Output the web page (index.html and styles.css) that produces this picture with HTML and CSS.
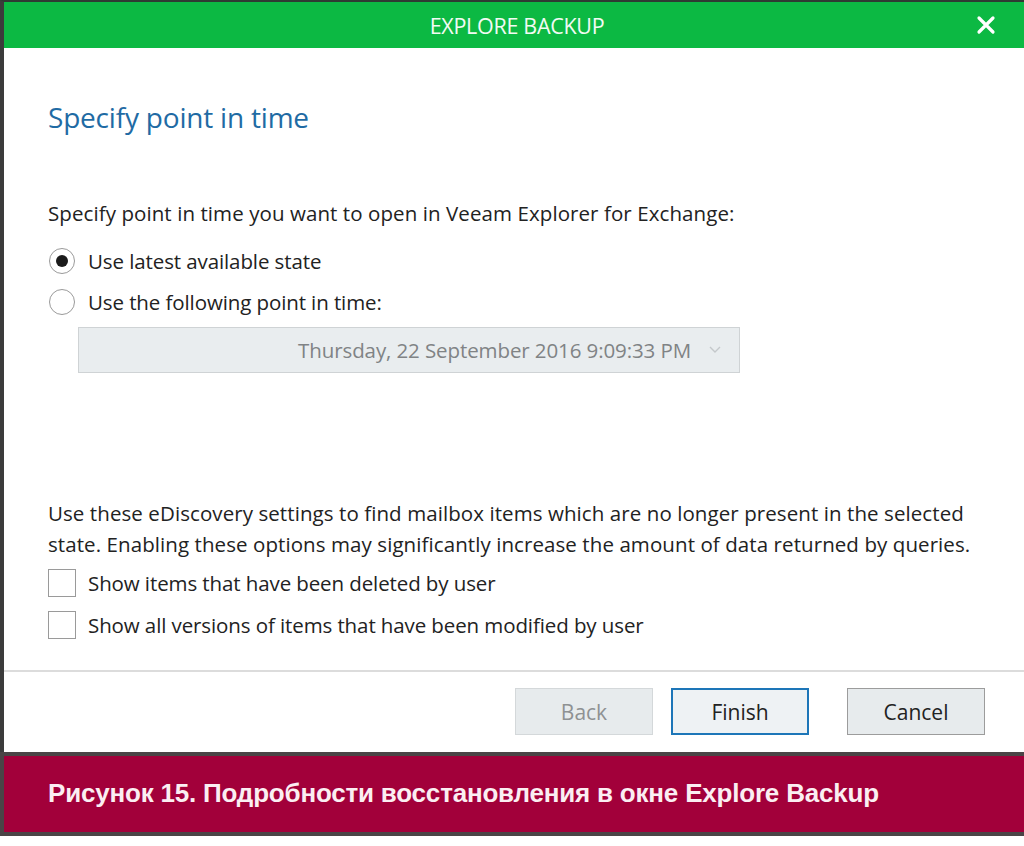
FILE: index.html
```html
<!DOCTYPE html>
<html>
<head>
<meta charset="utf-8">
<link rel="stylesheet" href="styles.css">
</head>
<body>
<div class="frame">
  <div class="dialog">
    <div class="titlebar">
      <span class="title">EXPLORE BACKUP</span>
      <span class="close">
        <svg width="20" height="20" viewBox="0 0 20 20"><path d="M3 3 L17 17 M17 3 L3 17" stroke="#fff" stroke-width="3.2" stroke-linecap="round"/></svg>
      </span>
    </div>
    <div class="content">
      <h1 class="heading">Specify point in time</h1>
      <p class="intro">Specify point in time you want to open in Veeam Explorer for Exchange:</p>
      <div class="option first">
        <span class="radio checked"><span class="dot"></span></span>
        <span class="label">Use latest available state</span>
      </div>
      <div class="option">
        <span class="radio"></span>
        <span class="label">Use the following point in time:</span>
      </div>
      <div class="select">
        <span class="select-text">Thursday, 22 September 2016 9:09:33 PM</span>
        <svg class="chev" width="12" height="8" viewBox="0 0 12 8"><path d="M1 1 L6 6 L11 1" fill="none" stroke="#c4c8cb" stroke-width="1.4"/></svg>
      </div>
      <div class="spacer"></div>
      <p class="desc">Use these eDiscovery settings to find mailbox items which are no longer present in the selected state. Enabling these options may significantly increase the amount of data returned by queries.</p>
      <div class="option check-opt first-check">
        <span class="checkbox"></span>
        <span class="label">Show items that have been deleted by user</span>
      </div>
      <div class="option check-opt">
        <span class="checkbox"></span>
        <span class="label">Show all versions of items that have been modified by user</span>
      </div>
    </div>
    <div class="footer">
      <button class="btn disabled">Back</button>
      <button class="btn primary">Finish</button>
      <button class="btn cancel">Cancel</button>
    </div>
  </div>
  <div class="caption">Рисунок 15. Подробности восстановления в окне Explore Backup</div>
</div>
</body>
</html>
```
FILE: styles.css
```css
* { box-sizing: border-box; }
html, body { margin: 0; padding: 0; background: #fff; }
body { width: 1024px; height: 846px; overflow: hidden; font-family: "Open Sans", "Noto Sans", sans-serif; color: #222; }
.frame { width: 1024px; background: #fff; }
.dialog {
  border-top: 2px solid #2f3a33;
  border-left: 4px solid #3b3b3b;
  height: 752px;
  display: flex;
  flex-direction: column;
}
.titlebar {
  height: 46px;
  background: #0cb943;
  position: relative;
  display: flex;
  align-items: center;
  justify-content: center;
}
.title {
  color: #f2fbf4;
  font-size: 21.5px;
  letter-spacing: -0.3px;
  margin-left: 6px;
  font-weight: 400;
}
.close {
  position: absolute;
  right: 28px;
  top: 13px;
  width: 20px;
  height: 20px;
}
.content {
  flex: 1;
  padding: 51px 0 0 44px;
  display: flex;
  flex-direction: column;
}
.heading {
  margin: 0;
  font-weight: 400;
  font-size: 28px;
  letter-spacing: -0.2px;
  color: #1f6ba4;
  line-height: 36px;
}
.intro {
  margin: 64px 0 0;
  font-size: 20.5px;
  letter-spacing: 0.08px;
  line-height: 28px;
}
.option {
  display: flex;
  align-items: center;
  height: 41px;
}
.option.first { margin-top: 13px; }
.option .label {
  font-size: 20.5px;
  letter-spacing: -0.1px;
}
.radio {
  width: 26px;
  height: 26px;
  border: 1.5px solid #9a9a9a;
  border-radius: 50%;
  margin: 0 13px 0 1px;
  display: flex;
  align-items: center;
  justify-content: center;
  background: #fff;
}
.radio .dot { width: 12px; height: 12px; border-radius: 50%; background: #1b1b1b; }
.select {
  margin: 5px 0 0 30px;
  width: 662px;
  height: 46px;
  background: #e9edef;
  border: 1px solid #cfd3d5;
  display: flex;
  align-items: center;
  justify-content: flex-end;
  padding-right: 16px;
}
.select-text { color: #808385; font-size: 20.5px; letter-spacing: -0.1px; margin-right: 18px; }
.chev { margin-right: 2px; }
.spacer { height: 125px; }
.desc {
  margin: 0;
  font-size: 20.5px;
  letter-spacing: 0.08px;
  line-height: 31px;
  width: 940px;
}
.check-opt { height: 42px; }
.check-opt.first-check { margin-top: 2px; }
.checkbox {
  width: 28px;
  height: 28px;
  border: 1.5px solid #9a9a9a;
  margin-right: 12px;
  background: #fff;
}
.footer {
  height: 82px;
  border-top: 2px solid #dcdcdc;
  display: flex;
  justify-content: flex-end;
  align-items: flex-start;
  padding: 16px 39px 0 0;
}
.btn {
  width: 138px;
  height: 47px;
  font-family: "Open Sans", "Noto Sans", sans-serif;
  font-size: 21px;
  background: #e6eaec;
  border: 1.5px solid #a8a8a8;
  color: #222;
  padding: 0;
}
.btn.disabled { color: #8e9193; border-color: #d4d8da; background: #e7ebed; margin-right: 18px; }
.btn.primary { border: 2px solid #1d76b8; background: #eef2f4; margin-right: 38px; }
.btn.cancel { background: #e7ebed; border-color: #9c9c9c; }
.caption {
  height: 84px;
  background: #a2003a;
  border-top: 4px solid #4a4446;
  border-bottom: 4px solid #4a4446;
  border-left: 4px solid #4a4446;
  color: #fbeef2;
  font-family: "Liberation Sans", Arial, sans-serif;
  font-weight: 700;
  font-size: 26px;
  padding: 22px 0 0 44px;
  letter-spacing: -0.2px;
}
```
